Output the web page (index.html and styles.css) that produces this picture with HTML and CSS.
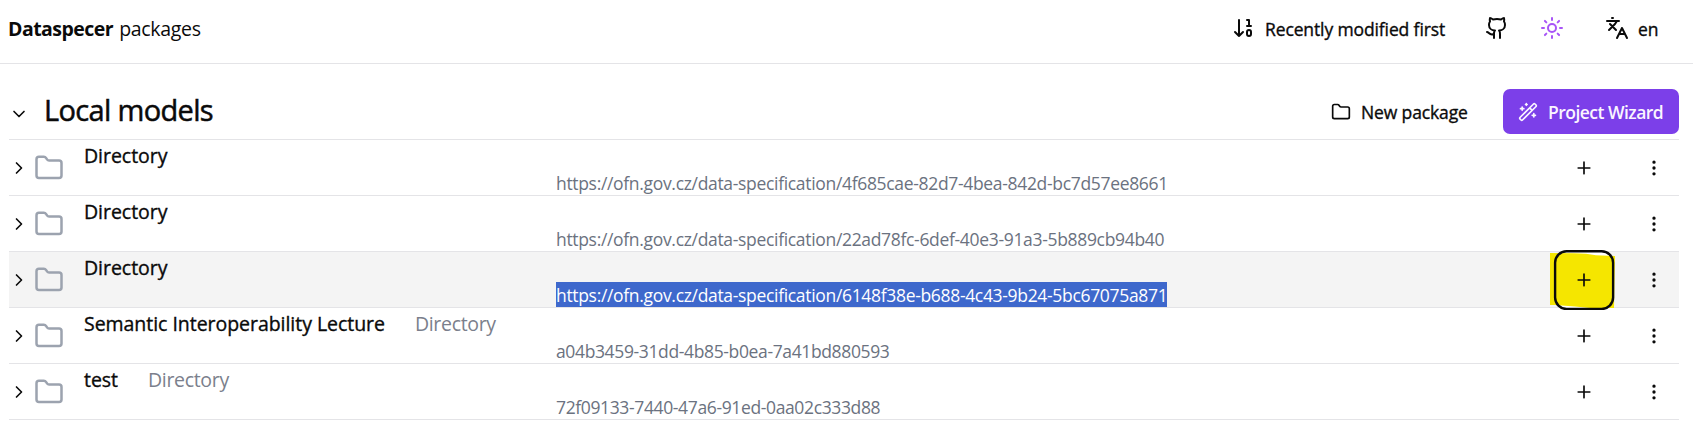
FILE: index.html
```html
<!DOCTYPE html>
<html lang="en">
<head>
<meta charset="utf-8">
<title>Dataspecer packages</title>
<link rel="stylesheet" href="styles.css">
</head>
<body>
<svg class="sprite" aria-hidden="true">
  <symbol id="right" viewBox="0 0 24 24"><path d="m9 18 6-6-6-6"/></symbol>
  <symbol id="down" viewBox="0 0 24 24"><path d="m6 9 6 6 6-6"/></symbol>
  <symbol id="folder" viewBox="0 0 24 24"><path d="M20 20a2 2 0 0 0 2-2V8a2 2 0 0 0-2-2h-7.9a2 2 0 0 1-1.69-.9L9.6 3.9A2 2 0 0 0 7.93 3H4a2 2 0 0 0-2 2v13a2 2 0 0 0 2 2Z"/></symbol>
  <symbol id="plus" viewBox="0 0 24 24"><path d="M5 12h14M12 5v14"/></symbol>
  <symbol id="dots" viewBox="0 0 24 24"><circle cx="12" cy="12" r="1"/><circle cx="12" cy="5" r="1"/><circle cx="12" cy="19" r="1"/></symbol>
</svg>
<header class="topbar">
  <div class="brand"><strong>Dataspecer</strong> <span>packages</span></div>
  <div class="sort">
    <svg class="icon big" viewBox="0 0 24 24"><path d="m3 16 4 4 4-4M7 20V4M17 10V4h-2M15 10h4"/><rect x="15" y="14" width="4" height="6" ry="2"/></svg>
    <span>Recently modified first</span>
  </div>
  <svg class="icon big github" viewBox="0 0 24 24"><path d="M15 22v-4a4.8 4.8 0 0 0-1-3.5c3 0 6-2 6-5.5.08-1.25-.27-2.48-1-3.5.28-1.15.28-2.35 0-3.5 0 0-1 0-3 1.5-2.64-.5-5.36-.5-8 0C6 2 5 2 5 2c-.3 1.15-.3 2.35 0 3.5A5.403 5.403 0 0 0 4 9c0 3.5 3 5.5 6 5.5-.39.49-.68 1.05-.85 1.65-.17.6-.22 1.23-.15 1.85v4"/><path d="M9 18c-4.51 2-5-2-7-2"/></svg>
  <svg class="icon big sun" viewBox="0 0 24 24"><circle cx="12" cy="12" r="4"/><path d="M12 2v2M12 20v2M4.93 4.93l1.41 1.41M17.66 17.66l1.41 1.41M2 12h2M20 12h2M6.34 17.66l-1.41 1.41M19.07 4.93l-1.41 1.41"/></svg>
  <div class="lang">
    <svg class="icon big" viewBox="0 0 24 24"><path d="m5 8 6 6M4 14l6-6 2-3M2 5h12M7 2h1M22 22l-5-10-5 10M14 18h6"/></svg>
    <span>en</span>
  </div>
</header>
<main>
  <div class="section">
    <svg class="icon"><use href="#down"/></svg>
    <h2>Local models</h2>
    <div class="new"><svg class="icon"><use href="#folder"/></svg><span>New package</span></div>
    <button class="wizard"><svg class="icon" viewBox="0 0 24 24"><path d="m21.64 3.64-1.28-1.28a1.21 1.21 0 0 0-1.72 0L2.36 18.64a1.21 1.21 0 0 0 0 1.72l1.28 1.28a1.2 1.2 0 0 0 1.72 0L21.64 5.36a1.2 1.2 0 0 0 0-1.72M14 7l3 3M5 6v4M19 14v4M10 2v2M7 8H3M21 16h-4M11 3H9"/></svg><span>Project Wizard</span></button>
  </div>
  <ul class="list">
    <li class="row">
      <svg class="icon"><use href="#right"/></svg><svg class="icon folder"><use href="#folder"/></svg>
      <div class="name"><b>Directory</b></div>
      <div class="iri"><span>https://ofn.gov.cz/data-specification/4f685cae-82d7-4bea-842d-bc7d57ee8661</span></div>
      <div class="add"><svg class="icon"><use href="#plus"/></svg></div><svg class="icon"><use href="#dots"/></svg>
    </li>
    <li class="row">
      <svg class="icon"><use href="#right"/></svg><svg class="icon folder"><use href="#folder"/></svg>
      <div class="name"><b>Directory</b></div>
      <div class="iri"><span>https://ofn.gov.cz/data-specification/22ad78fc-6def-40e3-91a3-5b889cb94b40</span></div>
      <div class="add"><svg class="icon"><use href="#plus"/></svg></div><svg class="icon"><use href="#dots"/></svg>
    </li>
    <li class="row active">
      <svg class="icon"><use href="#right"/></svg><svg class="icon folder"><use href="#folder"/></svg>
      <div class="name"><b>Directory</b></div>
      <div class="iri"><span class="selected">https://ofn.gov.cz/data-specification/6148f38e-b688-4c43-9b24-5bc67075a871</span></div>
      <div class="add marked">
        <svg class="marker" viewBox="0 0 66 60"><rect x="5" y="1" width="58" height="58" rx="11" fill="#fff"/><path d="M0 3 L24 3.2 L36 3.8 L46 5.2 L65 6 L64 58 L40 58 L25 56.5 L5 55 L0 55Z" fill="#f5e600"/><rect x="5.1" y="1.2" width="58" height="57.8" rx="11.5" fill="none" stroke="#0a0a0a" stroke-width="2.4"/></svg>
        <svg class="icon"><use href="#plus"/></svg>
      </div><svg class="icon"><use href="#dots"/></svg>
    </li>
    <li class="row">
      <svg class="icon"><use href="#right"/></svg><svg class="icon folder"><use href="#folder"/></svg>
      <div class="name"><b>Semantic Interoperability Lecture</b><span>Directory</span></div>
      <div class="iri"><span class="short">a04b3459-31dd-4b85-b0ea-7a41bd880593</span></div>
      <div class="add"><svg class="icon"><use href="#plus"/></svg></div><svg class="icon"><use href="#dots"/></svg>
    </li>
    <li class="row">
      <svg class="icon"><use href="#right"/></svg><svg class="icon folder"><use href="#folder"/></svg>
      <div class="name"><b>test</b><span>Directory</span></div>
      <div class="iri"><span class="short">72f09133-7440-47a6-91ed-0aa02c333d88</span></div>
      <div class="add"><svg class="icon"><use href="#plus"/></svg></div><svg class="icon"><use href="#dots"/></svg>
    </li>
  </ul>
</main>
</body>
</html>
```
FILE: styles.css
```css
* { box-sizing: border-box; }
body { margin: 0; height: 425px; overflow: hidden; background: #fff; color: #0a0a0a; font-family: "Segoe UI", "Open Sans", "Noto Sans", sans-serif; font-size: 17.5px; }
.sprite { display: none; }
.icon { width: 20px; height: 20px; flex: none; fill: none; stroke: currentColor; stroke-width: 2; stroke-linecap: round; stroke-linejoin: round; }
.big { width: 24px; height: 24px; }
span, b, strong, h2 { white-space: nowrap; }

.topbar { display: flex; align-items: center; height: 64px; padding: 0 34px 7px 8px; border-bottom: 1px solid #e4e4e7; }
.brand { display: flex; gap: 6px; margin-right: auto; font-size: 19.5px; line-height: 26px; padding-top: 1px; }
.brand strong { font-weight: 700; letter-spacing: -0.53px; }
.brand span { letter-spacing: -0.3px; }
.sort { display: flex; align-items: center; gap: 9px; width: 216px; letter-spacing: -0.12px; }
.sort span, .lang span { padding-top: 1px; }
.sort span, .lang span, .new span, .name b { -webkit-text-stroke: 0.35px currentColor; }
.github { margin-left: 37px; }
.sun { margin-left: 31px; color: #a855f7; }
.lang { display: flex; align-items: center; gap: 9px; width: 54px; margin-left: 41px; }

main { padding: 0 14px 0 9px; }
.section { display: flex; align-items: center; height: 76px; padding-top: 19px; border-bottom: 1px solid #e4e4e7; }
.section > .icon { margin-top: 5px; }
h2 { margin: -3px auto 0 15px; font-size: 29px; line-height: 38px; font-weight: 400; letter-spacing: -0.66px; -webkit-text-stroke: 0.5px currentColor; }
.new { display: flex; align-items: center; gap: 10px; width: 138px; margin-right: 34px; padding-top: 1px; letter-spacing: -0.13px; }
.wizard { display: flex; align-items: center; gap: 10px; width: 176px; height: 45px; margin-top: 1px; padding: 0 0 0 15px; border: 0; border-radius: 7px; background: #7c3fe9; color: #faf5ff; font: inherit; font-weight: 600; letter-spacing: -0.52px; }

.list { margin: 0; padding: 0; list-style: none; }
.row { display: flex; align-items: center; height: 56px; padding-right: 15px; border-bottom: 1px solid #e4e4e7; }
.active { background: #f4f4f4; }
.folder { width: 30px; height: 30px; margin-left: 5px; color: #9ca3af; }
.name { display: flex; gap: 30px; width: 472px; height: 55px; margin-left: 20px; padding-top: 3px; font-size: 19.5px; line-height: 26px; }
.name b { font-weight: 400; letter-spacing: -0.04px; }
.name span { color: #7b7f8c; letter-spacing: -0.32px; }
.iri { flex: 1; align-self: flex-end; height: 25px; color: #6b7280; line-height: 26px; }
.iri span { display: inline-block; height: 25px; letter-spacing: -0.323px; }
.iri .short { letter-spacing: -0.365px; }
.iri .selected { background: #3e68cc; color: #fff; }
.add { display: flex; justify-content: center; width: 60px; margin-right: 30px; }
.marked { position: relative; }
.marked .icon { position: relative; }
.marker { position: absolute; left: -4px; top: -20px; width: 66px; height: 60px; }
```
